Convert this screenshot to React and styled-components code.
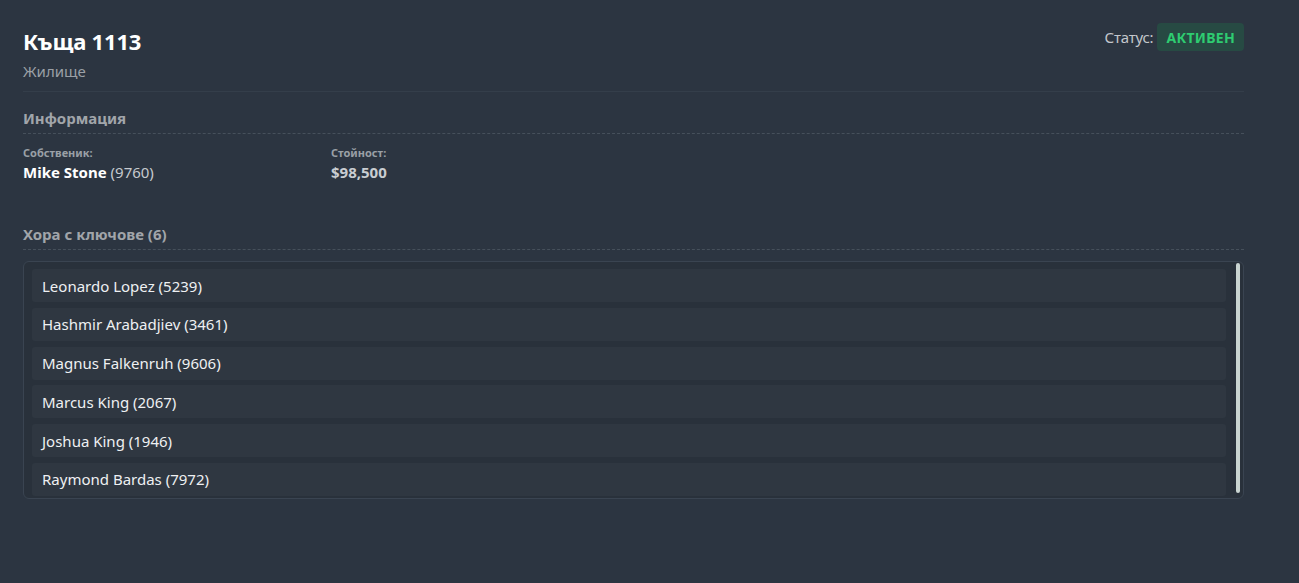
import React from "react";
import styled, { createGlobalStyle } from "styled-components";

const GlobalStyle = createGlobalStyle`
  html, body {
    margin: 0;
    padding: 0;
    background: #2c3541;
  }
  body {
    font-family: "Segoe UI", "Noto Sans", sans-serif;
    color: #e6e8eb;
  }
`;

const Page = styled.div`
  min-height: 583px;
  background: #2c3541;
  padding: 23px 55px 23px 23px;
  box-sizing: border-box;
`;

const Panel = styled.div`
  width: 1221px;
`;

const Header = styled.header`
  display: flex;
  justify-content: space-between;
  align-items: flex-start;
  padding-bottom: 10px;
  border-bottom: 1px solid #343e4a;
`;

const TitleBlock = styled.div`
  display: flex;
  flex-direction: column;
`;

const Title = styled.h1`
  margin: 4px 0 0;
  font-size: 22px;
  line-height: 28px;
  font-weight: 700;
  letter-spacing: -0.2px;
  color: #ffffff;
`;

const Subtitle = styled.div`
  margin-top: 6px;
  font-size: 15px;
  line-height: 20px;
  color: #9ba0a6;
`;

const StatusRow = styled.div`
  display: flex;
  align-items: center;
  gap: 4px;
  font-size: 15px;
  letter-spacing: -0.2px;
  color: #c3c7cc;
`;

const Badge = styled.span`
  display: inline-flex;
  align-items: center;
  height: 28px;
  padding: 0 9px;
  border-radius: 4px;
  background: ${(p) => p.$bg};
  color: ${(p) => p.$fg};
  font-size: 14px;
  font-weight: 700;
  letter-spacing: 0.3px;
`;

const Section = styled.section`
  margin-top: ${(p) => p.$top}px;
`;

const SectionTitle = styled.h2`
  margin: 0;
  padding-bottom: 5px;
  font-size: 15px;
  line-height: 20px;
  font-weight: 700;
  color: #a1a5aa;
  border-bottom: 1px dashed #46505b;
`;

const InfoGrid = styled.div`
  display: grid;
  grid-template-columns: 308px 308px;
  margin-top: 12px;
`;

const Field = styled.div`
  display: flex;
  flex-direction: column;
`;

const FieldLabel = styled.div`
  font-size: 11px;
  line-height: 14px;
  font-weight: 700;
  color: #9aa0a6;
`;

const FieldValue = styled.div`
  margin-top: 2px;
  font-size: 15px;
  line-height: 20px;
  font-weight: 700;
  color: ${(p) => (p.$muted ? "#c9cdd1" : "#ffffff")};
`;

const IdTag = styled.span`
  font-weight: 400;
  color: #c6cace;
`;

const ListBox = styled.div`
  margin-top: 11px;
  display: flex;
  height: 238px;
  box-sizing: border-box;
  border: 1px solid #3a4451;
  border-radius: 6px;
  background: #29313b;
  overflow: hidden;
`;

const List = styled.ul`
  flex: 1;
  list-style: none;
  margin: 0;
  padding: 7px 0 0 8px;
  display: flex;
  flex-direction: column;
  gap: 5.8px;
`;

const Item = styled.li`
  height: 33px;
  flex-shrink: 0;
  display: flex;
  align-items: center;
  padding: 0 10px;
  border-radius: 3px;
  background: #2f3741;
  font-size: 15px;
  color: #eef0f2;
`;

const Rail = styled.div`
  width: 8px;
  margin: 1px 1px 5px 8px;
  display: flex;
  justify-content: center;
`;

const Thumb = styled.div`
  width: 4px;
  height: 100%;
  border-radius: 2px;
  background: #c9d4d1;
`;

const keyHolders = [
  { name: "Leonardo Lopez", id: 5239 },
  { name: "Hashmir Arabadjiev", id: 3461 },
  { name: "Magnus Falkenruh", id: 9606 },
  { name: "Marcus King", id: 2067 },
  { name: "Joshua King", id: 1946 },
  { name: "Raymond Bardas", id: 7972 },
];

export default function App() {
  return (
    <>
      <GlobalStyle />
      <Page>
        <Panel>
          <Header>
            <TitleBlock>
              <Title>Къща 1113</Title>
              <Subtitle>Жилище</Subtitle>
            </TitleBlock>
            <StatusRow>
              Статус:
              <Badge $bg="#274a43" $fg="#2ecc71">АКТИВЕН</Badge>
            </StatusRow>
          </Header>

          <Section $top={16}>
            <SectionTitle>Информация</SectionTitle>
            <InfoGrid>
              <Field>
                <FieldLabel>Собственик:</FieldLabel>
                <FieldValue>
                  Mike Stone <IdTag>(9760)</IdTag>
                </FieldValue>
              </Field>
              <Field>
                <FieldLabel>Стойност:</FieldLabel>
                <FieldValue $muted>$98,500</FieldValue>
              </Field>
            </InfoGrid>
          </Section>

          <Section $top={42}>
            <SectionTitle>Хора с ключове ({keyHolders.length})</SectionTitle>
            <ListBox>
              <List>
                {keyHolders.map((p) => (
                  <Item key={p.id}>
                    {p.name} ({p.id})
                  </Item>
                ))}
              </List>
              <Rail>
                <Thumb />
              </Rail>
            </ListBox>
          </Section>
        </Panel>
      </Page>
    </>
  );
}
